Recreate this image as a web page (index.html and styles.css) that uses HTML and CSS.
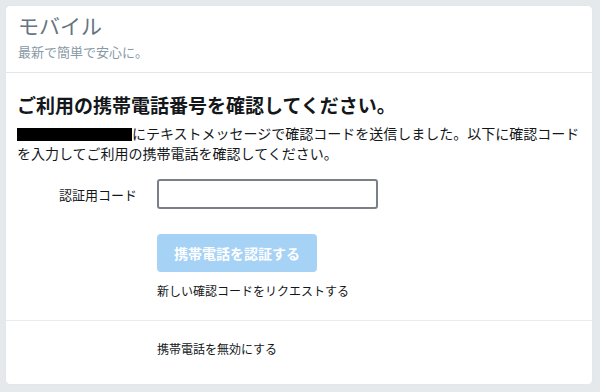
FILE: index.html
```html
<!DOCTYPE html>
<html lang="ja">
<head>
    <meta charset="UTF-8">
    <meta name="viewport" content="width=device-width, initial-scale=1.0">
    <title>モバイル</title>
    <link rel="stylesheet" href="styles.css">
</head>

<body>
<div class="card">
    <div class="card-header">
        <h1>モバイル</h1>
        <p class="subtitle">最新で簡単で安心に。</p>
    </div>

    <div class="card-body">
        <h2>ご利用の携帯電話番号を確認してください。</h2>
        <p class="message"><span class="redacted"></span>にテキストメッセージで確認コードを送信しました。以下に確認コードを入力してご利用の携帯電話を確認してください。</p>

        <div class="form-row">
            <label for="code">認証用コード</label>
            <input type="text" id="code">
        </div>

        <div class="form-actions">
            <button disabled>携帯電話を認証する</button>
            <a href="#" class="resend">新しい確認コードをリクエストする</a>
        </div>
    </div>

    <div class="card-footer">
        <a href="#" class="disable">携帯電話を無効にする</a>
    </div>
</div>
</body>
</html>
```

FILE: styles.css
```css
body {
    margin: 0;
    padding: 5px 7px 6px 5px;
    background-color: #e6e9ec;
    font-family: 'Liberation Sans', 'Noto Sans CJK JP', sans-serif;
    color: #14171a;
}

.card {
    background-color: #fff;
    border-radius: 5px;
    border: 1px solid #e1e8ed;
}

.card-header {
    padding: 8px 12px 10px;
    border-bottom: 1px solid #e1e8ed;
}

h1 {
    margin: 0 0 5px;
    font-size: 21px;
    line-height: 25px;
    font-weight: normal;
    color: #66757f;
}

.subtitle {
    margin: 0;
    font-size: 13px;
    line-height: 18px;
    color: #8899a6;
}

.card-body {
    padding: 21px 11px 20px 11px;
    border-bottom: 1px solid #e6ecf0;
}

h2 {
    margin: 0 0 4px;
    font-size: 19px;
    line-height: 26px;
    font-weight: bold;
    color: #14171a;
}

.message {
    margin: 0;
    font-size: 14px;
    line-height: 20px;
    color: #14171a;
}

.redacted {
    display: inline-block;
    width: 115px;
    height: 13px;
    background-color: #000;
    vertical-align: -2px;
}

.form-row {
    display: flex;
    align-items: center;
    gap: 20px;
    margin-top: 15px;
}

.form-row label {
    width: 120px;
    text-align: right;
    font-size: 13px;
    color: #14171a;
}

.form-row input {
    width: 205px;
    height: 26px;
    margin: 0;
    padding: 0 6px;
    border: 2px solid #7b7f88;
    border-radius: 3px;
    font-size: 14px;
    box-sizing: content-box;
}

.form-actions {
    margin: 25px 0 0 140px;
    display: flex;
    flex-direction: column;
    align-items: flex-start;
}

button {
    width: 160px;
    height: 38px;
    border: none;
    border-radius: 4px;
    background-color: #a6d2f6;
    color: #fff;
    font-family: inherit;
    font-size: 14px;
    font-weight: bold;
}

.resend,
.disable {
    display: block;
    font-size: 12px;
    line-height: 16px;
    color: #14171a;
    text-decoration: none;
}

.resend {
    margin-top: 12px;
}

.card-footer {
    padding: 21px 11px 26px 151px;
}
```
